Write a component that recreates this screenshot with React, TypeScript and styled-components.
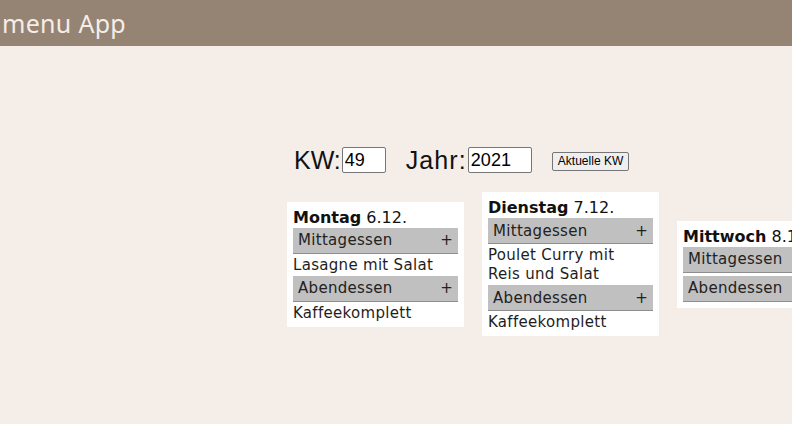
import React from "react";
import styled, { createGlobalStyle } from "styled-components";

const Global = createGlobalStyle`
  html, body { margin: 0; padding: 0; background: #f5ede7; }
  body { font-family: "DejaVu Sans", sans-serif; overflow: hidden; }
`;

const Header = styled.header`
  height: 46px;
  background: #958473;
  display: flex;
  align-items: center;
  padding-left: 2px;
`;

const Title = styled.h1`
  margin: 0;
  font-family: "Noto Sans", sans-serif;
  font-weight: 400;
  font-size: 25px;
  color: #f5ede7;
  letter-spacing: 0.3px;
`;

const Main = styled.main`
  padding: 101px 0 0 287px;
`;

const Controls = styled.div`
  display: flex;
  align-items: center;
  padding-left: 7px;
  height: 26px;
  font-family: "Liberation Sans", Arial, sans-serif;
`;

const Label = styled.label<{ gap: number; spacing?: number }>`
  font-size: 25px;
  color: #111;
  display: flex;
  align-items: center;
  margin-right: ${(p) => p.gap}px;
  letter-spacing: ${(p) => p.spacing ?? 0}px;
`;

const NumInput = styled.input<{ w: number }>`
  width: ${(p) => p.w}px;
  height: 26px;
  box-sizing: border-box;
  font-family: "Liberation Sans", Arial, sans-serif;
  font-size: 18px;
  letter-spacing: 0;
  padding: 1px 2px;
  border: 1px solid #767676;
  border-radius: 2px;
  background: #fff;
  color: #000;
  margin-left: 1px;
`;

const Button = styled.button`
  font-family: "Liberation Sans", Arial, sans-serif;
  font-size: 12px;
  height: 19px;
  padding: 0 5px;
  border: 1px solid #767676;
  border-radius: 2px;
  background: #efefef;
  color: #000;
  margin: 2px 0 0 1px;
`;

const Week = styled.div`
  display: flex;
  align-items: center;
  margin-top: 19px;
  height: 144px;
`;

const Card = styled.section`
  flex: 0 0 auto;
  width: 165px;
  padding: 6px 6px 3px;
  background: #fff;
  margin-right: 18px;
`;

const DayTitle = styled.div`
  font-size: 16px;
  color: #111;
  line-height: 20px;
  b { font-weight: 700; }
`;

const MealBar = styled.div`
  display: flex;
  justify-content: space-between;
  align-items: center;
  height: 25px;
  background: #c0c0c0;
  border-bottom: 1px solid #8e8e8e;
  padding: 0 5px;
  font-size: 15px;
  letter-spacing: 0.3px;
  color: #222;
`;

const Plus = styled.span`
  font-size: 15px;
  color: #222;
`;

const Dish = styled.div`
  font-size: 15px;
  letter-spacing: 0.3px;
  color: #1e1e1e;
  line-height: 19px;
  padding: 2px 4px 1px 0;
`;

type Day = { name: string; date: string; lunch: string; dinner: string; plus: boolean };

const days: Day[] = [
  { name: "Montag", date: "6.12.", lunch: "Lasagne mit Salat", dinner: "Kaffeekomplett", plus: true },
  { name: "Dienstag", date: "7.12.", lunch: "Poulet Curry mit Reis und Salat", dinner: "Kaffeekomplett", plus: true },
  { name: "Mittwoch", date: "8.12.", lunch: "", dinner: "", plus: false },
];

export default function App() {
  return (
    <>
      <Global />
      <Header>
        <Title>menu App</Title>
      </Header>
      <Main>
        <Controls>
          <Label gap={20}>
            KW:<NumInput w={44} defaultValue="49" />
          </Label>
          <Label gap={19} spacing={1.1}>
            Jahr:<NumInput w={64} defaultValue="2021" />
          </Label>
          <Button>Aktuelle KW</Button>
        </Controls>
        <Week>
          {days.map((d) => (
            <Card key={d.name}>
              <DayTitle>
                <b>{d.name}</b> {d.date}
              </DayTitle>
              <MealBar>
                Mittagessen{d.plus && <Plus>+</Plus>}
              </MealBar>
              <Dish>{d.lunch}</Dish>
              <MealBar>
                Abendessen{d.plus && <Plus>+</Plus>}
              </MealBar>
              <Dish>{d.dinner}</Dish>
            </Card>
          ))}
        </Week>
      </Main>
    </>
  );
}
